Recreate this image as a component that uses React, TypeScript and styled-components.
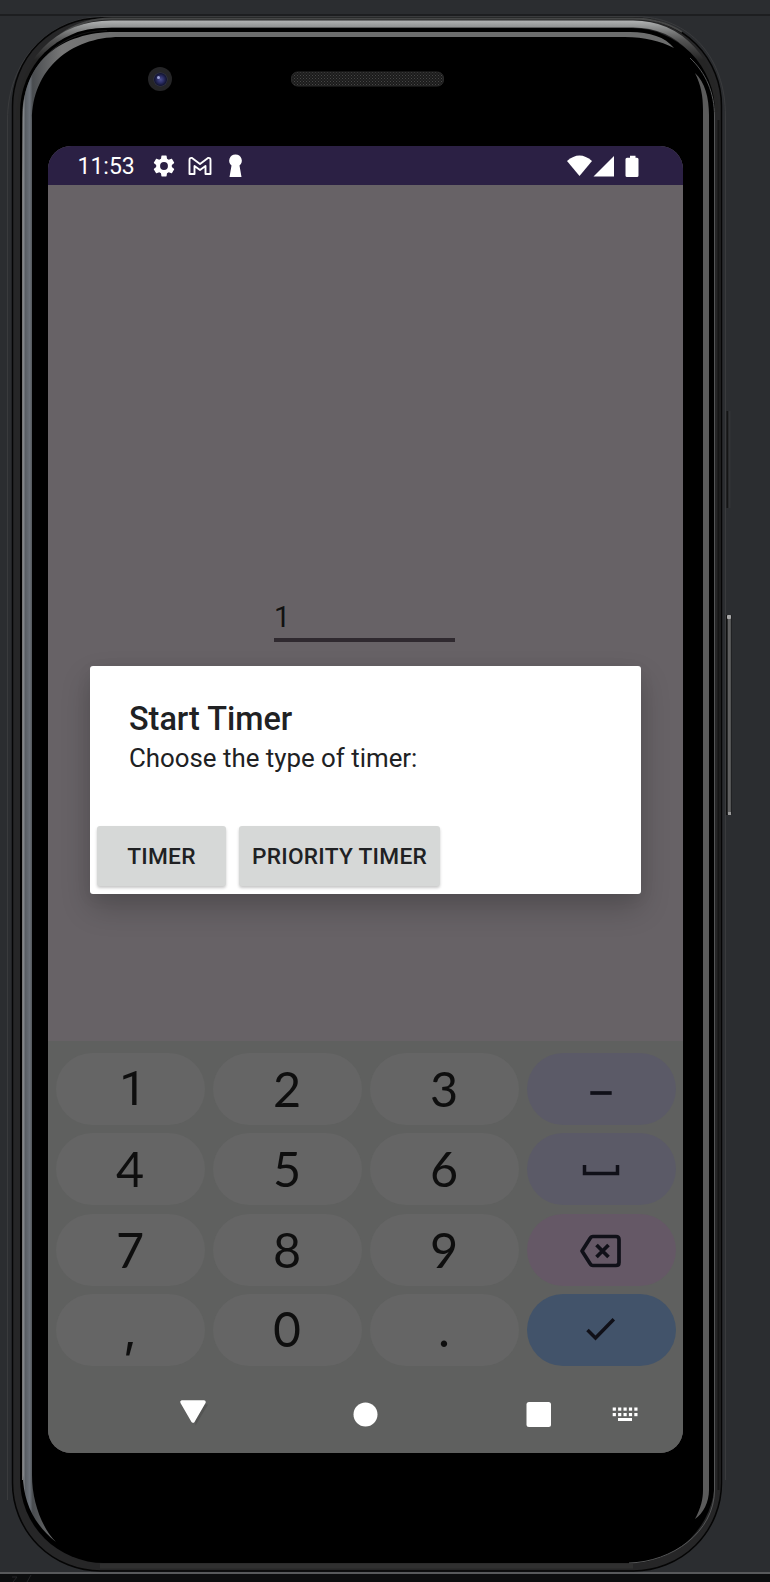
import React from "react";
import styled, { createGlobalStyle } from "styled-components";

const GlobalStyle = createGlobalStyle`
  * { box-sizing: border-box; }
  body { margin: 0; background: #2b2d30; font-family: Roboto, sans-serif; }
`;

const Page = styled.div`
  width: 770px;
  height: 1582px;
  position: relative;
  overflow: hidden;
  background: #2b2d30;
`;

const Phone = styled.main`
  width: 770px;
  height: 1582px;
  padding: 146px 87px 129px 48px;
`;

const BezelArt = styled.svg`
  position: absolute;
  inset: 0;
`;

const Screen = styled.div`
  position: relative;
  width: 635px;
  height: 1307px;
  border-radius: 23px;
  overflow: hidden;
  background: #676266;
  display: flex;
  flex-direction: column;
`;

const StatusBar = styled.header`
  height: 39px;
  flex: none;
  background: #2b2044;
  display: flex;
  align-items: center;
  padding: 0 43px 0 29.5px;
  color: #fff;
`;

const Clock = styled.span`
  font-size: 23px;
  line-height: 39px;
  width: 74px;
  padding-top: 2px;
`;

const StatusIcons = styled.div`
  display: flex;
  align-items: center;
  gap: 12.5px;
`;

const SystemIcons = styled.div`
  display: flex;
  align-items: center;
  margin-left: auto;
`;

const Content = styled.section`
  height: 856px;
  flex: none;
  padding: 411px 0 0 226px;
`;

const NumberField = styled.div`
  width: 181px;
  height: 46px;
  border-bottom: 4px solid #2f292f;
  font-size: 29px;
  line-height: 42px;
  color: #111;
`;

const Keyboard = styled.section`
  flex: 1;
  background: #5f605f;
  padding: 12px 7px 0 8px;
  display: flex;
  flex-direction: column;
`;

const KeyGrid = styled.div`
  display: grid;
  grid-template-columns: repeat(4, 149px);
  grid-auto-rows: 72px;
  column-gap: 8px;
  row-gap: 8.3px;
`;

const Key = styled.button<{ $tone?: string; $font: string; $shift?: number }>`
  border: 0;
  padding: 0 1px 1px ${(p) => p.$shift ?? 0}px;
  border-radius: 36px;
  background: ${(p) => p.$tone ?? "#656565"};
  color: #0e0e0e;
  font-family: ${(p) => p.$font}, sans-serif;
  font-size: 48.5px;
  line-height: 71px;
  display: flex;
  align-items: center;
  justify-content: center;
`;

const NavBar = styled.nav`
  flex: 1;
`;

const NavSvg = styled.svg`
  display: block;
  width: 620px;
  height: 82px;
`;

const Dialog = styled.div`
  position: absolute;
  left: 42px;
  top: 520px;
  width: 551px;
  height: 228px;
  background: #fff;
  border-radius: 3px;
  box-shadow: 0 14px 30px rgba(0, 0, 0, 0.2), 0 4px 16px rgba(0, 0, 0, 0.06);
  display: flex;
  flex-direction: column;
  color: #202123;
`;

const DialogText = styled.div`
  height: 160px;
  padding: 33px 39px 0;
`;

const DialogTitle = styled.h1`
  margin: 0;
  font-size: 32.4px;
  line-height: 40px;
  font-weight: 500;
`;

const DialogMessage = styled.p`
  margin: 0;
  font-size: 25.85px;
  line-height: 38px;
`;

const DialogActions = styled.div`
  display: flex;
  gap: 13px;
  padding-left: 7px;
`;

const ActionButton = styled.button<{ $width: number }>`
  width: ${(p) => p.$width}px;
  height: 60px;
  border: 0;
  padding: 0;
  border-radius: 3px;
  background: #d6d8d7;
  color: #202123;
  font-family: Roboto, sans-serif;
  font-size: 22.7px;
  letter-spacing: 0.27px;
  font-weight: 500;
  box-shadow: 0 2px 3px rgba(0, 0, 0, 0.22);
`;

function Bezel() {
  return (
    <BezelArt width="770" height="1582" viewBox="0 0 770 1582" fill="none">
      <defs>
        <linearGradient id="rim" x1="0" y1="20" x2="0" y2="100" gradientUnits="userSpaceOnUse">
          <stop offset="0" stopColor="#b4b6b6" />
          <stop offset="0.09" stopColor="#8f9191" />
          <stop offset="0.25" stopColor="#555" />
          <stop offset="0.5" stopColor="#252525" />
          <stop offset="1" stopColor="#252525" />
        </linearGradient>
        <linearGradient id="edge" x1="23" y1="0" x2="120" y2="0" gradientUnits="userSpaceOnUse">
          <stop offset="0" stopColor="#8b8f93" />
          <stop offset="0.025" stopColor="#595e64" />
          <stop offset="0.07" stopColor="#6a7078" />
          <stop offset="0.1" stopColor="#4a4d50" />
          <stop offset="0.4" stopColor="#777" />
          <stop offset="1" stopColor="#6c6d6d" />
        </linearGradient>
        <linearGradient id="hairline" x1="0" y1="30" x2="0" y2="180" gradientUnits="userSpaceOnUse">
          <stop offset="0" stopColor="#111" />
          <stop offset="0.3" stopColor="#333" />
          <stop offset="1" stopColor="#777" />
        </linearGradient>
        <pattern id="mesh" width="3" height="3" patternUnits="userSpaceOnUse">
          <rect width="3" height="3" fill="#1b1b1b" />
          <rect width="1" height="1" fill="#474747" />
          <rect x="1.500" y="1.500" width="1" height="1" fill="#3c3c3c" />
        </pattern>
        <radialGradient id="lens">
          <stop offset="0" stopColor="#4c4f8e" />
          <stop offset="0.5" stopColor="#292b62" />
          <stop offset="0.85" stopColor="#141633" />
          <stop offset="1" stopColor="#34364c" />
        </radialGradient>
      </defs>
      <rect y="14" width="770" height="2" fill="#1d1e20" />
      <rect y="1572" width="770" height="2" fill="#58595b" />
      <rect y="1574" width="770" height="8" fill="#0c0d0e" />
      <path d="M12 1577h5l-4 5M31 1575l-4 7" stroke="#242526" />
      <path d="M727.500 411v97" stroke="#151515" strokeWidth="2" />
      <path d="M729.500 411v97" stroke="#333436" strokeWidth="2" />
      <path d="M726.500 615v200" stroke="#111" strokeWidth="2" />
      <path d="M729.300 615v199" stroke="#606060" strokeWidth="3" />
      <path d="M731.500 615v199" stroke="#202123" />
      <rect x="727" y="615" width="4" height="4" rx="1" fill="#a8a8a8" />
      <rect x="728" y="812" width="3" height="3" fill="#999" />
      <path d="M7.500 1500V120C7.500 62 47 16.500 106 16.500H635C690 16.500 725.500 58 725.500 116V1480" stroke="#3a3b3d" />
      <rect x="12.500" y="18" width="709" height="1553" rx="88" fill="#262627" stroke="#050505" strokeWidth="1.500" />
      <path d="M60 35C75 24 92 18.500 112 18.500H633C652 18.500 668 23 682 32" stroke="#454646" strokeWidth="2" />
      <path d="M19.500 120C19.500 63 57 24 112 24H633C681 24 715 63 715 112" stroke="url(#rim)" strokeWidth="7" />
      <rect x="20" y="28" width="695" height="1535" rx="84" fill="#000" />
      <path d="M22.500 1480V118C22.500 68 58 30.500 107 30.500" stroke="url(#hairline)" />
      <path d="M690 58C706 73 714.500 93 714.500 116V1490C714.500 1532 672 1562 629 1563" stroke="#555657" />
      <path d="M718.500 120V1490" stroke="#151515" strokeWidth="2" />
      <path d="M56 1542C33 1524 23 1500 23 1475V115C23 61 62 32 115 32H630C650 32 665 37 674 48C660 41 645 37 625 37H120C70 37 32 70 32 120V1475C32 1502 42 1528 56 1542Z" fill="url(#edge)" />
      <path d="M695 73C705 82 709 98 709 115V1490C709 1502 703 1514 695 1519C701 1508 703 1499 703 1490V110C703 96 701 85 695 73Z" fill="#5b5b5b" />
      <path d="M100 1566H633" stroke="#303030" strokeWidth="5" />
      <circle cx="160" cy="79" r="12" fill="#252527" />
      <circle cx="160.500" cy="79.500" r="7" fill="url(#lens)" />
      <circle cx="158.500" cy="77.500" r="1.500" fill="#9ca2d4" />
      <rect x="291.500" y="72" width="152" height="14" rx="6" fill="url(#mesh)" stroke="#2a2a2a" />
    </BezelArt>
  );
}

type KeySpec = {
  id: string;
  label?: string;
  font?: string;
  shift?: number;
  tone?: string;
  icon?: React.ReactNode;
};

const keys: KeySpec[] = [
  { id: "1", label: "1", font: "Roboto", shift: 6 },
  { id: "2", label: "2" },
  { id: "3", label: "3" },
  {
    id: "minus",
    tone: "#5b5a67",
    icon: <path d="M-10.700 4H10.700" strokeWidth="3.700" />,
  },
  { id: "4", label: "4" },
  { id: "5", label: "5" },
  { id: "6", label: "6" },
  {
    id: "space",
    tone: "#5b5a67",
    icon: <path d="M-16.500-4V4.500H16.500V-4" strokeWidth="3.500" />,
  },
  { id: "7", label: "7" },
  { id: "8", label: "8" },
  { id: "9", label: "9" },
  {
    id: "backspace",
    tone: "#655866",
    icon: (
      <path
        d="M-8-12.500H15Q18-12.500 18-9.500V13.500Q18 16.500 15 16.500H-8Q-10 16.500-11 14.500L-19 2L-11-10.500Q-10-12.500-8-12.500ZM-4.500-4L7.500 8M7.500-4L-4.500 8"
        strokeWidth="3.700"
        strokeLinejoin="round"
      />
    ),
  },
  { id: "comma", label: ",", font: "Inter" },
  { id: "0", label: "0", font: "Inter" },
  { id: "dot", label: ".", font: "Inter" },
  {
    id: "enter",
    tone: "#42536a",
    icon: <path d="M-13.500 1L-5.500 9L12.800-9.800" strokeWidth="3.500" />,
  },
];

function KeyIcon({ children }: { children: React.ReactNode }) {
  return (
    <svg width="60" height="60" viewBox="-30 -30 60 60" fill="none" stroke="#101018">
      {children}
    </svg>
  );
}

export default function App() {
  return (
    <>
      <GlobalStyle />
      <Page>
        <Bezel />
        <Phone>
          <Screen>
            <StatusBar>
              <Clock>11:53</Clock>
              <StatusIcons>
                <svg width="24" height="24" viewBox="1 1 22 22" fill="#fff">
                  <path d="M19.140 12.940c.04-.3.06-.61.06-.94 0-.32-.02-.64-.07-.94l2.030-1.580c.18-.14.23-.41.12-.61l-1.920-3.320c-.12-.22-.37-.29-.59-.22l-2.390.96c-.5-.38-1.030-.7-1.620-.94l-.36-2.540c-.04-.24-.24-.41-.48-.41h-3.840c-.24 0-.43.17-.47.41l-.36 2.540c-.59.24-1.130.57-1.620.94l-2.390-.96c-.22-.08-.47 0-.59.22L2.740 8.870c-.12.21-.08.47.12.61l2.030 1.580c-.05.3-.09.63-.09.94s.02.64.07.94l-2.030 1.580c-.18.14-.23.41-.12.61l1.920 3.320c.12.22.37.29.59.22l2.390-.96c.5.38 1.030.7 1.620.94l.36 2.540c.05.24.24.41.48.41h3.840c.24 0 .44-.17.47-.41l.36-2.540c.59-.24 1.130-.56 1.620-.94l2.390.96c.22.08.47 0 .59-.22l1.920-3.320c.12-.22.07-.47-.12-.61zM12 15.600A3.600 3.600 0 1 1 12 8.400a3.600 3.600 0 0 1 0 7.200z" />
                </svg>
                <svg width="24" height="24" viewBox="0 0 24 24" fill="none" stroke="#fff" strokeWidth="1.900" strokeLinejoin="round">
                  <path d="M1.500 20V6Q1.500 3.500 4 4L12 10L20 4Q22.500 3.500 22.500 6V20H17.500V12L12 16L6.500 12V20Z" />
                </svg>
                <svg width="20" height="24" viewBox="0 0 20 24" fill="#fff">
                  <path d="M10.500 .5A6.200 6.200 0 0 0 6.500 11.500L4.500 23H16.500L14.500 11.500A6.200 6.200 0 0 0 10.500 .5Z" />
                </svg>
              </StatusIcons>
              <SystemIcons>
                <svg width="73" height="24" viewBox="0 0 73 24" fill="#fff">
                  <path d="M0 7Q12.500-4 25 7L12.500 22Z" />
                  <path d="M26.500 22.500L47 2V22.500Z" />
                  <path d="M63 2.500V1.800H68.500V3.800H70Q71.500 3.800 71.500 5.300V21.500Q71.500 23 70 23H60Q58.500 23 58.500 21.500V5.300Q58.500 3.800 60 3.800H63Z" />
                </svg>
              </SystemIcons>
            </StatusBar>
            <Content>
              <NumberField>1</NumberField>
            </Content>
            <Keyboard>
              <KeyGrid>
                {keys.map((k) => (
                  <Key key={k.id} $tone={k.tone} $font={k.font ?? "Lato"} $shift={k.shift}>
                    {k.icon ? <KeyIcon>{k.icon}</KeyIcon> : k.label}
                  </Key>
                ))}
              </KeyGrid>
              <NavBar>
                <NavSvg viewBox="56 1366 620 82" fill="#fff">
                  <path d="M195.500 1425.500L208 1404.500L195 1404Z" fill="#484848" opacity="0.500" />
                  <path d="M182 1402H204L193 1421Z" stroke="#fff" strokeWidth="3.500" strokeLinejoin="round" />
                  <circle cx="365.500" cy="1414.500" r="12" />
                  <rect x="526.500" y="1402" width="24.500" height="25" rx="2.500" />
                  {[0, 1, 2, 3, 4].map((i) => (
                    <g key={i}>
                      <rect x={612.7 + i * 5.4} y="1407.500" width="3.200" height="3.200" />
                      <rect x={612.7 + i * 5.4} y="1413" width="3.200" height="3.200" />
                    </g>
                  ))}
                  <rect x="618" y="1418" width="14" height="3" />
                </NavSvg>
              </NavBar>
            </Keyboard>
            <Dialog>
              <DialogText>
                <DialogTitle>Start Timer</DialogTitle>
                <DialogMessage>Choose the type of timer:</DialogMessage>
              </DialogText>
              <DialogActions>
                <ActionButton $width={129}>TIMER</ActionButton>
                <ActionButton $width={201}>PRIORITY TIMER</ActionButton>
              </DialogActions>
            </Dialog>
          </Screen>
        </Phone>
      </Page>
    </>
  );
}
